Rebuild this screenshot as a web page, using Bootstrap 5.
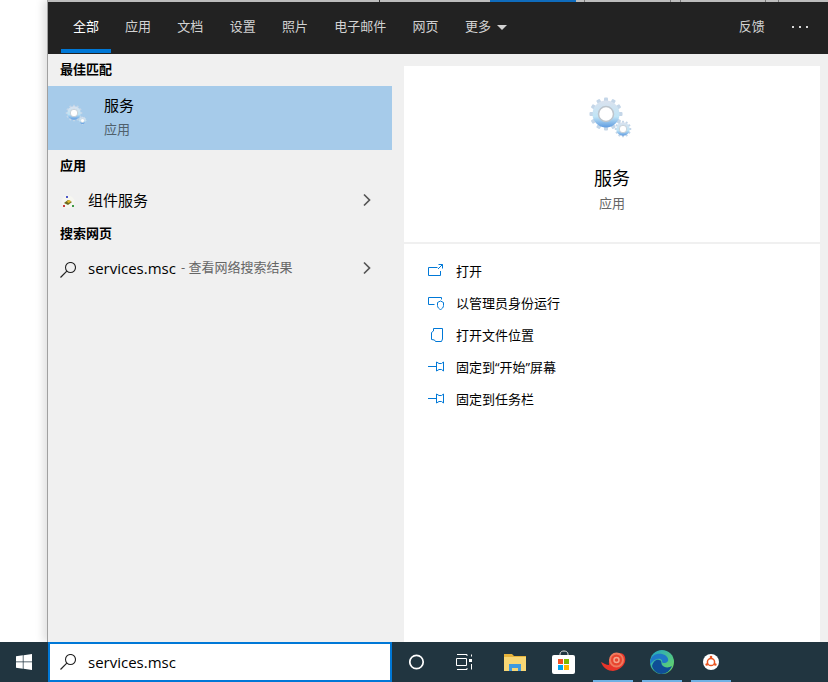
<!DOCTYPE html>
<html>
<head>
<meta charset="utf-8">
<title>搜索</title>
<link href="https://cdn.jsdelivr.net/npm/bootstrap@5.3.0/dist/css/bootstrap.min.css" rel="stylesheet">
<style>
  html, body { height: 682px; overflow: hidden; }
  body { font-family: "Open Sans", "Noto Sans CJK SC", sans-serif; font-size: 15px; background: #fff; color: #000; }
  .desk { height: 642px; padding-left: 47px; }
  .panel { height: 642px; border-left: 1px solid #a0a0a0; box-shadow: -4px 0 8px rgba(0,0,0,.12); background: #f0f0f0; }
  .strip { height: 2px; background: #bdbdbd; flex: none; }
  .strip span { display: block; height: 2px; flex: none; }
  .s-tick { width: 1px; background: #777; }
  .s-dark { width: 1px; background: #333; }
  .s-blue { width: 86px; background: #0f6cbd; }
  .w8 { width: 8px; } .w9 { width: 9px; } .w12 { width: 12px; } .w84 { width: 84px; } .w85 { width: 85px; } .w110 { width: 110px; } .w331 { width: 331px; }
  .topbar { height: 52px; background: #222; padding-left: 13px; padding-right: 8px; flex: none; }
  .tab { position: relative; color: #d2d2d2; padding: 0 12px; height: 52px; line-height: 49px; white-space: nowrap; margin-right: 2.3px; font-size: 13px; }
  .tab.on { color: #fff; width: 50px; padding: 0; text-align: center; margin-right: 2px; }
  .tab.on::after { content: ""; position: absolute; left: 0; right: 0; bottom: 1px; height: 4px; background: #0078d7; }
  .caret-down { display: inline-block; border-left: 5px solid transparent; border-right: 5px solid transparent; border-top: 5px solid #d2d2d2; margin-left: 6px; vertical-align: 1px; }
  .dots { height: 50px; gap: 4px; padding: 0 12px; }
  .dots i { display: block; width: 2px; height: 2px; background: #d8d8d8; margin-left: 1px; }
  .left-col { width: 344px; flex: none; }
  .heading { font-size: 13px; font-weight: 700; height: 32px; line-height: 30px; padding-left: 12px; }
  .best-row { height: 64px; background: #a6cbea; padding-left: 17px; padding-bottom: 3px; }
  .best-row .ico { width: 25px; flex: none; margin-bottom: 2px; }
  .best-name { font-size: 15px; line-height: 20px; margin-left: 14px; }
  .best-sub { font-size: 13px; color: #50606c; line-height: 20px; margin-left: 14px; margin-top: 4px; }
  .res-row { height: 36px; padding-left: 12px; padding-right: 20px; font-size: 15px; }
  .res-row .ico { width: 28px; flex: none; }
  .res-hint { color: #666; font-size: 13px; margin-left: 5px; }
  .right-col { width: 416px; flex: none; margin-top: 12px; margin-left: 12px; background: #fff; height: 576px; }
  .hero { height: 178px; border-bottom: 2px solid #f0f0f0; padding-top: 30px; }
  .hero-name { font-size: 18px; line-height: 24px; margin-top: 22px; }
  .hero-sub { font-size: 13px; color: #666; line-height: 20px; margin-top: 3px; }
  .actions { padding: 12px 0 0 24px; }
  .act { height: 32px; font-size: 13px; }
  .act svg { width: 16px; height: 16px; margin-right: 12px; flex: none; overflow: visible; }
  .taskbar { height: 40px; background: #213540; }
  .start-btn { width: 48px; flex: none; }
  .search-box { width: 344px; height: 40px; flex: none; background: #fff; border: 2px solid #0078d7; padding-left: 10px; font-size: 15px; }
  .search-box svg { margin-right: 12px; }
  .tray { width: 49px; flex: none; height: 40px; position: relative; }
  .tray.open::after { content: ""; position: absolute; left: 5px; right: 4px; bottom: 0; height: 2px; background: #6fb1e4; }
  .task-view { margin-right: 4px; }
</style>
</head>
<body>
<div class="desk">
  <div class="panel d-flex flex-column">
    <div class="strip d-flex">
      <span class="w331"></span><span class="s-dark"></span><span class="w110"></span><span class="s-blue"></span><span class="w8"></span><span class="s-tick"></span><span class="w85"></span><span class="s-tick"></span><span class="w9"></span><span class="s-tick"></span><span class="w84"></span><span class="s-tick"></span><span class="w12"></span><span class="s-tick"></span>
    </div>
    <div class="topbar d-flex align-items-start">
      <div class="tab on">全部</div>
      <div class="tab">应用</div>
      <div class="tab">文档</div>
      <div class="tab">设置</div>
      <div class="tab">照片</div>
      <div class="tab">电子邮件</div>
      <div class="tab">网页</div>
      <div class="tab">更多<span class="caret-down"></span></div>
      <div class="tab ms-auto">反馈</div>
      <div class="dots d-flex align-items-center"><i></i><i></i><i></i></div>
    </div>
    <div class="d-flex flex-grow-1">
      <div class="left-col">
        <div class="heading">最佳匹配</div>
        <div class="best-row d-flex align-items-center">
          <div class="ico">
            <svg width="24" height="24" viewBox="0 0 48 48"><use href="#gears"/></svg>
          </div>
          <div>
            <div class="best-name">服务</div>
            <div class="best-sub">应用</div>
          </div>
        </div>
        <div class="heading">应用</div>
        <div class="res-row d-flex align-items-center">
          <div class="ico">
            <svg width="16" height="16" viewBox="0 0 16 16"><circle cx="8" cy="8" r="6.500" fill="#f6f6f0"/><path d="M4 9l4-3 4 2-4 3z" fill="#6d6a1e"/><path d="M7 7l3-1 1 2-3 1z" fill="#e0b92c"/><rect x="6" y="2" width="2" height="2" fill="#4d57c8"/><rect x="3" y="11" width="2" height="2" fill="#c83c3c"/><rect x="12" y="11" width="2" height="2" fill="#3c9a46"/></svg>
          </div>
          <span>组件服务</span>
          <svg class="ms-auto" width="10" height="14" viewBox="0 0 10 14"><path d="M2 1.500l5.500 5.500L2 12.500" fill="none" stroke="#555" stroke-width="1.700"/></svg>
        </div>
        <div class="heading">搜索网页</div>
        <div class="res-row d-flex align-items-center">
          <div class="ico">
            <svg width="16" height="16" viewBox="0 0 16 16"><circle cx="10.500" cy="5.500" r="5" fill="none" stroke="#222" stroke-width="1.100"/><path d="M6.800 9.200L.5 15.500" stroke="#222" stroke-width="1.200"/></svg>
          </div>
          <span>services.msc</span><span class="res-hint">- 查看网络搜索结果</span>
          <svg class="ms-auto" width="10" height="14" viewBox="0 0 10 14"><path d="M2 1.500l5.500 5.500L2 12.500" fill="none" stroke="#555" stroke-width="1.700"/></svg>
        </div>
      </div>
      <div class="right-col">
        <div class="hero text-center">
          <svg width="48" height="48" viewBox="0 0 48 48"><use href="#gears"/></svg>
          <div class="hero-name">服务</div>
          <div class="hero-sub">应用</div>
        </div>
        <div class="actions">
          <div class="act d-flex align-items-center">
            <svg viewBox="0 0 16 16" fill="none" stroke="#0078d7"><path d="M9.500 3.500h-9v8h12V7M10.500.5h4V4.500M14.500.5L10 5"/></svg>打开
          </div>
          <div class="act d-flex align-items-center">
            <svg viewBox="0 0 16 16" fill="none" stroke="#0078d7"><path d="M6.500 8.500h-6v-7h13v2"/><path d="M9.500 6.500l3-1.500 3 1.500v3c0 2-1.500 3.500-3 4-1.500-.5-3-2-3-4z"/></svg>以管理员身份运行
          </div>
          <div class="act d-flex align-items-center">
            <svg viewBox="0 0 16 16" fill="none" stroke="#0078d7"><path d="M5.500.5h9v10.500l-1 2.500H7.500l-1-1.500-3-.5V4.500l2-1.500z"/></svg>打开文件位置
          </div>
          <div class="act d-flex align-items-center">
            <svg viewBox="0 0 16 16" fill="none" stroke="#0078d7"><path d="M0 6.500h8.500M8.500 2l2.500 1.500h2.500L15.500 2v9L13.500 9.500H11L8.500 11z"/></svg>固定到“开始”屏幕
          </div>
          <div class="act d-flex align-items-center">
            <svg viewBox="0 0 16 16" fill="none" stroke="#0078d7"><path d="M0 6.500h8.500M8.500 2l2.500 1.500h2.500L15.500 2v9L13.500 9.500H11L8.500 11z"/></svg>固定到任务栏
          </div>
        </div>
      </div>
    </div>
  </div>
</div>
<div class="taskbar d-flex align-items-center">
  <div class="start-btn d-flex justify-content-center">
    <svg width="16" height="16" viewBox="0 0 16 16" fill="#fff"><path d="M0 2.300L6.800 1.300V7.600H0zM7.500 1.200L16 0V7.600H7.500zM0 8.300H6.800V14.700L0 13.700zM7.500 8.300H16V16L7.500 14.800z"/></svg>
  </div>
  <div class="search-box d-flex align-items-center">
    <svg width="16" height="16" viewBox="0 0 16 16"><circle cx="10.500" cy="5.500" r="5" fill="none" stroke="#222" stroke-width="1.100"/><path d="M6.800 9.200L.5 15.500" stroke="#222" stroke-width="1.200"/></svg>
    services.msc
  </div>
  <div class="tray d-flex align-items-center justify-content-center">
    <svg width="16" height="16" viewBox="0 0 16 16"><circle cx="7.500" cy="8" r="6.700" fill="none" stroke="#fff" stroke-width="1.700"/></svg>
  </div>
  <div class="tray d-flex align-items-center justify-content-center">
    <svg class="task-view" width="16" height="16" viewBox="0 0 16 16" fill="none" stroke="#fff"><path d="M1 .5h10v1.500M1 15.500h10V14M.5 4.500h10v7H.5z"/><path d="M13 5h3v3h-3z" fill="#fff" stroke="none"/><path d="M15.500 .5v2M15.500 10v5.500"/></svg>
  </div>
  <div class="tray d-flex align-items-center justify-content-center">
    <svg width="22" height="18" viewBox="0 0 22 18"><path d="M0 1h8l2 2h12v15H0z" fill="#e6b33b"/><path d="M0 4h22v14H0z" fill="#f8d775"/><path d="M5 18v-7h12v7h-3v-3H8v3z" fill="#3f9ae0"/></svg>
  </div>
  <div class="tray d-flex align-items-center justify-content-center">
    <svg width="24" height="24" viewBox="0 0 24 24"><path d="M8 6V4c0-4 8-4 8 0v2" fill="none" stroke="#ddd"/><rect y="5" width="23" height="19" rx="2" fill="#fff"/><rect x="6" y="9" width="5" height="5" fill="#f25022"/><rect x="12" y="9" width="5" height="5" fill="#7fba00"/><rect x="6" y="15" width="5" height="5" fill="#00a4ef"/><rect x="12" y="15" width="5" height="5" fill="#ffb900"/></svg>
  </div>
  <div class="tray open d-flex align-items-center justify-content-center">
    <svg width="26" height="22" viewBox="0 0 26 22"><path d="M1 11c3 1 5 3 8 3-1-7 4-12 10-12s7 5 6 9c-2 5-6 8-12 9C8 20 3 17 1 11z" fill="#e8352a"/><circle cx="16.500" cy="9" r="6.500" fill="#e8452f" stroke="#ee7a5e" stroke-width="2"/><circle cx="16.500" cy="9" r="2.500" fill="none" stroke="#f4a58c" stroke-width="1.500"/></svg>
  </div>
  <div class="tray open d-flex align-items-center justify-content-center">
    <svg width="24" height="24" viewBox="0 0 24 24">
      <defs><linearGradient id="edgeTop" x1="0" y1="0" x2="1" y2="1"><stop offset="0" stop-color="#1fa1c9"/><stop offset="1" stop-color="#6fdc5d"/></linearGradient></defs>
      <circle cx="12" cy="12" r="12" fill="url(#edgeTop)"/>
      <path d="M0 12C1 5 7 3 12 4c4 1 7 4 6 7-1 2-5 3-6 1 1-2-2-4-5-3-4 1-6 4-7 6 0 0 0-2 0-3z" fill="#1f78c8"/>
      <path d="M2 16c1-4 4-7 7-6 3 0 2 3 3 5 2 3 7 3 10 1-2 5-6 8-11 8-5-1-8-4-9-8z" fill="#0f4d96"/>
    </svg>
  </div>
  <div class="tray open d-flex align-items-center justify-content-center">
    <svg width="16" height="16" viewBox="0 0 16 16"><circle cx="8" cy="8" r="8" fill="#fff"/><circle cx="8" cy="8" r="3.600" fill="none" stroke="#e95420" stroke-width="1.500"/><circle cx="8" cy="3" r="1.300" fill="#e95420"/><circle cx="3.700" cy="10.500" r="1.300" fill="#e95420"/><circle cx="12.300" cy="10.500" r="1.300" fill="#e95420"/></svg>
  </div>
</div>
<svg width="0" height="0" class="d-block position-absolute">
  <defs>
    <linearGradient id="gearFill" x1="0" y1="0" x2="0" y2="1"><stop offset="0" stop-color="#dbe2ee"/><stop offset=".6" stop-color="#bfe4f6"/><stop offset="1" stop-color="#5f9be0"/></linearGradient>
    <g id="bigGear">
      <g fill="#c4d6e8"><rect x="-2" y="-16.500" width="4" height="33" rx="1"/><rect x="-2" y="-16.500" width="4" height="33" rx="1" transform="rotate(30)"/><rect x="-2" y="-16.500" width="4" height="33" rx="1" transform="rotate(60)"/><rect x="-2" y="-16.500" width="4" height="33" rx="1" transform="rotate(90)"/><rect x="-2" y="-16.500" width="4" height="33" rx="1" transform="rotate(120)"/><rect x="-2" y="-16.500" width="4" height="33" rx="1" transform="rotate(150)"/></g>
      <circle r="13.500" fill="url(#gearFill)"/>
      <circle r="7.500" fill="#fff" stroke="#bcc4cc" stroke-width="1.500"/>
    </g>
    <g id="gears">
      <use href="#bigGear" transform="translate(18 18)"/>
      <use href="#bigGear" transform="translate(35 33) scale(.5)"/>
    </g>
  </defs>
</svg>
<script src="https://cdn.jsdelivr.net/npm/bootstrap@5.3.0/dist/js/bootstrap.bundle.min.js"></script>
</body>
</html>
